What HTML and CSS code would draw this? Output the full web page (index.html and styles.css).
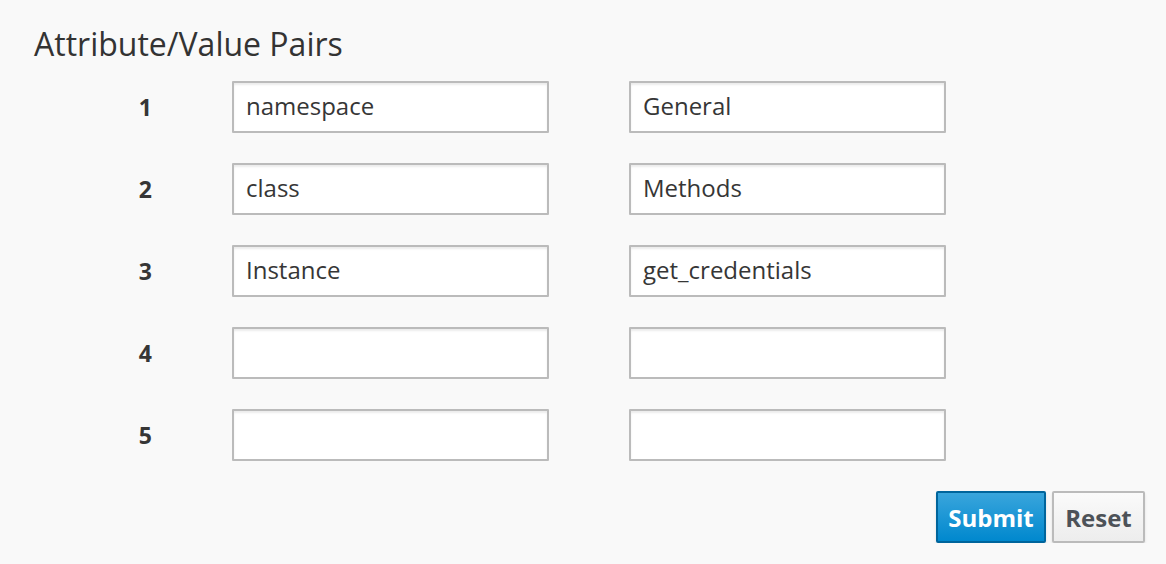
FILE: index.html
```html
<!DOCTYPE html>
<html>
<head>
<meta charset="utf-8">
<link rel="stylesheet" href="styles.css">
</head>
<body>
<div class="page">
  <h3 class="title">Attribute/Value Pairs</h3>
  <div class="rows">
    <div class="row"><span class="num">1</span><input class="field" value="namespace"><input class="field" value="General"></div>
    <div class="row"><span class="num">2</span><input class="field" value="class"><input class="field" value="Methods"></div>
    <div class="row"><span class="num">3</span><input class="field" value="Instance"><input class="field" value="get_credentials"></div>
    <div class="row"><span class="num">4</span><input class="field" value=""><input class="field" value=""></div>
    <div class="row"><span class="num">5</span><input class="field" value=""><input class="field" value=""></div>
  </div>
  <div class="actions">
    <button class="btn btn-primary">Submit</button>
    <button class="btn btn-default">Reset</button>
  </div>
</div>
</body>
</html>
```
FILE: styles.css
```css
html, body {
  margin: 0;
  padding: 0;
  background: #f9f9f9;
  font-family: "Open Sans", "Liberation Sans", sans-serif;
  color: #363636;
}
.page {
  padding: 21px 21px 0 34px;
}
.title {
  margin: 0;
  font-size: 32px;
  font-weight: 400;
  line-height: 45px;
  color: #333;
}
.rows {
  margin-top: 15px;
  display: flex;
  flex-direction: column;
  gap: 30px;
}
.row {
  display: grid;
  grid-template-columns: 118px 317px 317px;
  column-gap: 80px;
  align-items: center;
}
.num {
  text-align: right;
  font-weight: 700;
  font-size: 23px;
  color: #363636;
}
.field {
  box-sizing: border-box;
  height: 52px;
  width: 317px;
  margin: 0;
  padding: 0 12px 3px;
  border: 2px solid #bbb;
  border-radius: 1px;
  background: #fff;
  box-shadow: inset 0 2px 2px rgba(3,3,3,0.08);
  font-family: "Open Sans", "Liberation Sans", sans-serif;
  font-size: 24px;
  color: #363636;
  outline: none;
}
.actions {
  margin-top: 30px;
  display: flex;
  justify-content: flex-end;
  gap: 6px;
}
.btn {
  box-sizing: border-box;
  height: 52px;
  padding: 0 10px;
  border-radius: 2px;
  font-family: "Open Sans", "Liberation Sans", sans-serif;
  font-size: 24px;
  font-weight: 700;
  box-shadow: 0 2px 3px rgba(3,3,3,0.1);
}
.btn-primary {
  width: 110px;
  color: #fff;
  border: 2px solid #00659c;
  background: linear-gradient(to bottom, #39a5dc 0%, #0088ce 100%);
}
.btn-default {
  width: 93px;
  color: #4d5258;
  border: 2px solid #bbb;
  background: linear-gradient(to bottom, #fafafa 0%, #ededed 100%);
}
```
